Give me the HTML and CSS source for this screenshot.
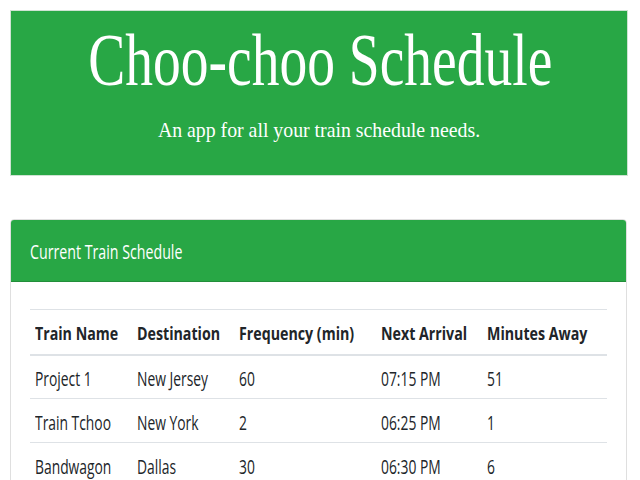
FILE: index.html
```html
<!DOCTYPE html>
<html lang="en">
<head>
<meta charset="utf-8">
<title>Choo-choo Schedule</title>
<link rel="stylesheet" href="styles.css">
</head>
<body>
  <header class="jumbotron">
    <h1 class="title"><span class="sq sq-title">Choo-choo Schedule</span></h1>
    <p class="lead"><span class="sq sq-lead">An app for all your train schedule needs.</span></p>
  </header>

  <section class="card">
    <div class="card-header"><span class="sq">Current Train Schedule</span></div>
    <div class="card-body">
      <table class="schedule">
        <colgroup>
          <col class="c1"><col class="c2"><col class="c3"><col class="c4"><col class="c5">
        </colgroup>
        <thead>
          <tr>
            <th><span class="sq">Train Name</span></th>
            <th><span class="sq">Destination</span></th>
            <th><span class="sq">Frequency (min)</span></th>
            <th><span class="sq">Next Arrival</span></th>
            <th><span class="sq">Minutes Away</span></th>
          </tr>
        </thead>
        <tbody>
          <tr>
            <td><span class="sq">Project 1</span></td>
            <td><span class="sq">New Jersey</span></td>
            <td><span class="sq">60</span></td>
            <td><span class="sq">07:15 PM</span></td>
            <td><span class="sq">51</span></td>
          </tr>
          <tr>
            <td><span class="sq">Train Tchoo</span></td>
            <td><span class="sq">New York</span></td>
            <td><span class="sq">2</span></td>
            <td><span class="sq">06:25 PM</span></td>
            <td><span class="sq">1</span></td>
          </tr>
          <tr>
            <td><span class="sq">Bandwagon</span></td>
            <td><span class="sq">Dallas</span></td>
            <td><span class="sq">30</span></td>
            <td><span class="sq">06:30 PM</span></td>
            <td><span class="sq">6</span></td>
          </tr>
        </tbody>
      </table>
    </div>
  </section>
</body>
</html>
```

FILE: styles.css
```css
html, body {
  margin: 0;
  padding: 0;
  background: #ffffff;
}

body {
  font-family: "Open Sans", "Noto Sans", "Liberation Sans", sans-serif;
  color: #212529;
}

/* glyphs in the reference are horizontally condensed */
.sq {
  display: inline-block;
  white-space: nowrap;
  transform: scaleX(0.71);
  transform-origin: left center;
}

.jumbotron {
  margin: 10px 12px 0 10px;
  height: 166px;
  box-sizing: border-box;
  background: #28a745;
  border: 1px solid #cfe3d3;
  color: #ffffff;
  text-align: center;
  padding-top: 9px;
  overflow: hidden;
}

.title {
  margin: 0;
  font-family: "Liberation Serif", "Times New Roman", serif;
  font-weight: normal;
  font-size: 74px;
  line-height: 80px;
  white-space: nowrap;
}

.sq-title {
  transform: scaleX(0.75);
  transform-origin: center center;
}

.lead {
  margin: 16px 0 0;
  font-family: "Liberation Serif", "Times New Roman", serif;
  font-size: 22px;
  line-height: 28px;
  white-space: nowrap;
}

.sq-lead {
  transform: scaleX(0.9);
  transform-origin: center center;
}

.card {
  margin: 43px 13px 0 10px;
  border: 1px solid rgba(0, 0, 0, 0.125);
  border-radius: 4px;
  overflow: hidden;
}

.card-header {
  background: #28a745;
  color: #ffffff;
  font-size: 20px;
  line-height: 24px;
  padding: 20px 19px 17px;
  border-bottom: 1px solid rgba(0, 0, 0, 0.15);
}

.card-body {
  padding: 27px 19px 20px;
}

.schedule {
  width: 100%;
  border-collapse: collapse;
  table-layout: fixed;
}

.c1 { width: 102px; }
.c2 { width: 102px; }
.c3 { width: 142px; }
.c4 { width: 106px; }

.schedule th,
.schedule td {
  text-align: left;
  padding: 0 5px;
  white-space: nowrap;
  vertical-align: middle;
  overflow: visible;
}

.schedule th {
  font-size: 18px;
  font-weight: bold;
  height: 45px;
  box-sizing: border-box;
  line-height: 22px;
  padding-top: 2px;
  border-top: 1px solid #dee2e6;
  border-bottom: 2px solid #dee2e6;
}

.schedule th .sq {
  transform: scaleX(0.79);
}

.schedule td {
  font-size: 19.5px;
  height: 44px;
  line-height: 22px;
  padding-top: 5px;
  border-bottom: 1px solid #dee2e6;
  box-sizing: border-box;
}
```
